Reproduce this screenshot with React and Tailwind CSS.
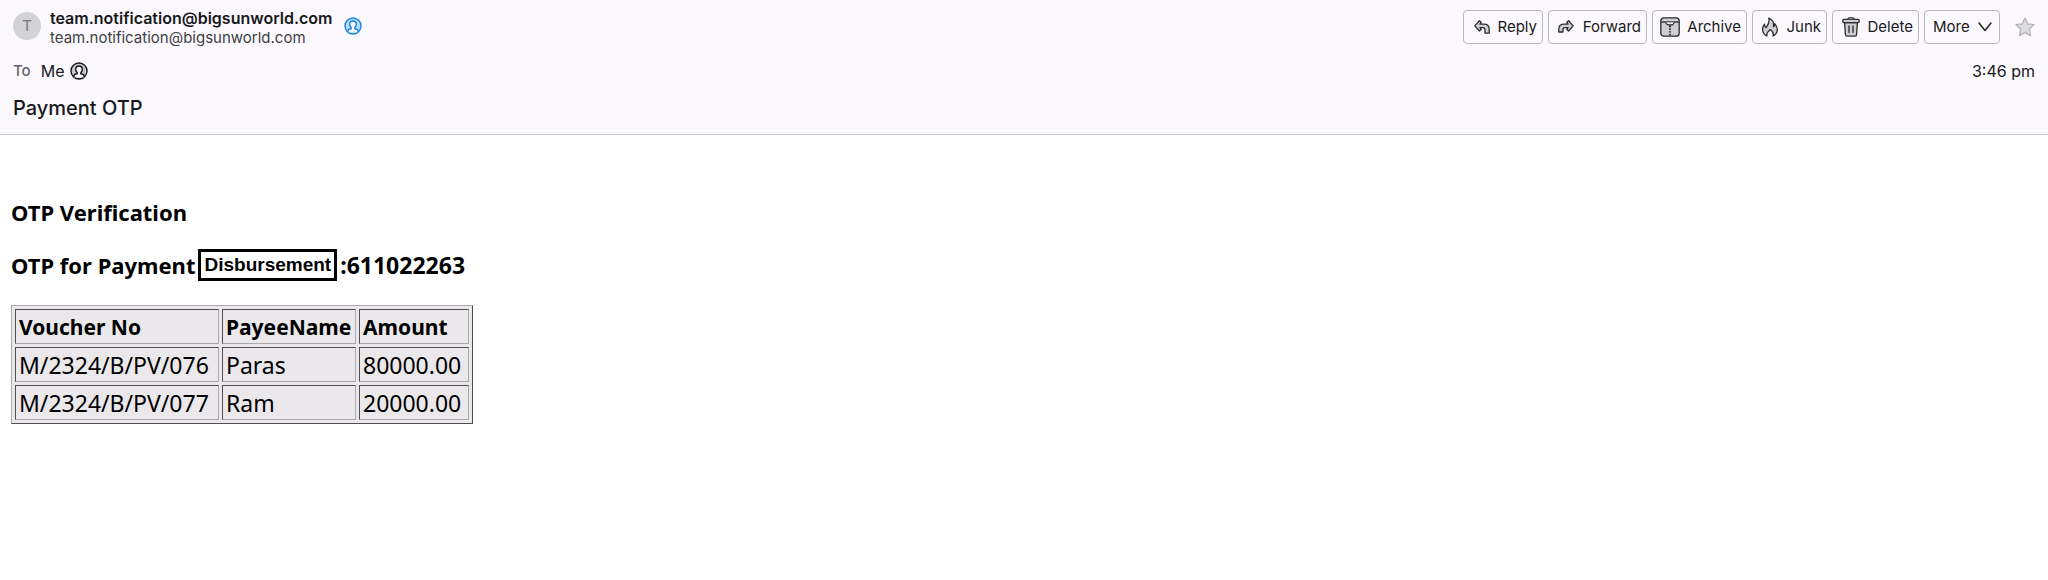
import React from 'react';

const vouchers = [
  { id: 'M/2324/B/PV/076', payee: 'Paras', amount: '80000.00' },
  { id: 'M/2324/B/PV/077', payee: 'Ram', amount: '20000.00' }
];

const cellBorder = 'border border-t-[#504c51] border-l-[#504c51] border-b-[#a9a8ab] border-r-[#a9a8ab]';

const ReplyIcon = () => (
  <svg viewBox="0 0 16 14" className="w-4 h-[14px]" fill="#cfced1" stroke="#2b2b2e" strokeWidth="1.3" strokeLinejoin="round">
    <path d="M5.4 0.8 L0.8 5.9 L5.4 11 L7.2 9.6 L6 7.6 H8.6 Q11 7.6 11 10 V13.2 H15.2 V9.4 Q15.2 4.2 10 4.2 H6 L7.2 2.2 Z" />
  </svg>
);

const ForwardIcon = () => (
  <svg viewBox="0 0 16 14" className="w-4 h-[14px]" fill="#cfced1" stroke="#2b2b2e" strokeWidth="1.3" strokeLinejoin="round">
    <path d="M10.6 0.8 L15.2 5.9 L10.6 11 L8.8 9.6 L10 7.6 H7.4 Q5 7.6 5 9.6 V12 H0.8 V9.2 Q0.8 4.2 6 4.2 H10 L8.8 2.2 Z" />
  </svg>
);

const ArchiveIcon = () => (
  <svg viewBox="0 0 20 20" className="w-5 h-5" fill="none" stroke="#2b2b2e" strokeWidth="1.3" strokeLinejoin="round">
    <rect x="0.8" y="0.8" width="18.4" height="18.4" rx="3" fill="#cfced1" />
    <path d="M1 5 H19" />
    <path d="M5.5 5.4 L7.4 8 L9 7.4 L10 9 L11 7.4 L12.6 8 L14.5 5.4" fill="#fbf9fd" strokeWidth="1.1" />
    <path d="M10 9 V19" strokeDasharray="1.4 1.2" strokeWidth="1.8" />
  </svg>
);

const JunkIcon = () => (
  <svg viewBox="0 0 16 20" className="w-4 h-5" fill="#cfced1" stroke="#2b2b2e" strokeWidth="1.3" strokeLinejoin="round">
    <path d="M5 19 C-0.4 16.4 -0.4 10.8 2.6 7.2 C2.4 9 2.8 10.2 4 10.6 C6 7.8 8.2 5.4 6.8 1 C11 3 12.2 6.2 11.4 9.6 C12.6 9.2 13 8 12.8 6.6 C16.4 10.8 16.2 16.6 11 19 C12 16.6 11 14.8 8.4 12.6 C5.6 14.8 4.2 16.6 5 19 Z" />
  </svg>
);

const DeleteIcon = () => (
  <svg viewBox="0 0 18 20" className="w-[18px] h-5" fill="#cfced1" stroke="#2b2b2e" strokeWidth="1.3" strokeLinejoin="round" strokeLinecap="round">
    <path d="M2.6 5.6 L3.4 17.4 Q3.5 19.2 5.2 19.2 H12.8 Q14.5 19.2 14.6 17.4 L15.4 5.6 Z" />
    <rect x="0.8" y="2.4" width="16.4" height="3.2" rx="1.2" />
    <path d="M6 2.2 Q6 0.8 7.4 0.8 H10.6 Q12 0.8 12 2.2" />
    <path d="M7 9 V15.6 M11 9 V15.6" />
  </svg>
);

const ContactIcon = ({ stroke, fill }) => (
  <svg viewBox="0 0 18 18" className="w-[18px] h-[18px] shrink-0" stroke={stroke} strokeWidth="1.4" strokeLinejoin="round">
    <circle cx="9" cy="9" r="8" fill={fill} />
    <path d="M4 15.2 V14 C4 12.6 5.4 12 7.2 11.8 V10.6 C4.6 8.4 5.2 4 9 4 C12.8 4 13.4 8.4 10.8 10.6 V11.8 C12.6 12 14 12.6 14 14 V15.2" fill="#fbf9fd" />
  </svg>
);

const ActionButton = ({ icon, label, className }) => (
  <button
    type="button"
    className={`flex items-center justify-between h-[34px] border border-[#b9b8bb] rounded-[4px] text-[#18181b] ${className}`}
  >
    {icon}
    {label}
  </button>
);

function App() {
  return (
    <div className="min-h-screen bg-white font-['Inter',sans-serif]">
      {/* Message header */}
      <header className="bg-[#fbf9fd] border-b border-[#cfced2] px-[13px] pt-[10px] pb-3 text-[#18181b]">
        <div className="flex justify-between items-start">
          <div className="flex items-center h-8">
            <div className="w-7 h-7 mr-[9px] rounded-full bg-[#d3d2d5] text-[#77767a] text-[15px] flex items-center justify-center">T</div>
            <div className="mr-[11px] pt-[3px]">
              <div className="text-base leading-5 font-semibold">team.notification@bigsunworld.com</div>
              <div className="text-[15px] leading-5 text-[#3f3f43]">team.notification@bigsunworld.com</div>
            </div>
            <ContactIcon stroke="#1a85e0" fill="#b9dcf8" />
          </div>

          <div className="flex items-center gap-[5px] text-[15px]">
            <ActionButton icon={<ReplyIcon />} label="Reply" className="w-20 pl-[10px] pr-[5px]" />
            <ActionButton icon={<ForwardIcon />} label="Forward" className="w-[99px] pl-[9px] pr-[5px]" />
            <ActionButton icon={<ArchiveIcon />} label="Archive" className="w-[95px] pl-[7px] pr-[5px]" />
            <ActionButton icon={<JunkIcon />} label="Junk" className="w-[75px] pl-[9px] pr-[5px]" />
            <ActionButton icon={<DeleteIcon />} label="Delete" className="w-[87px] pl-[9px] pr-[5px]" />
            <ActionButton
              icon="More"
              label={
                <svg viewBox="0 0 14 10" className="w-[14px] h-[10px]" fill="none" stroke="#2b2b2e" strokeWidth="1.6" strokeLinecap="round" strokeLinejoin="round">
                  <path d="M1 1 L7 8.4 L13 1" />
                </svg>
              }
              className="w-[76px] pl-2 pr-[7px]"
            />
            <button type="button" aria-label="Star" className="ml-[10px]">
              <svg viewBox="0 0 20 20" className="w-5 h-5" fill="#dddcdf" stroke="#b4b3b7" strokeWidth="1.3" strokeLinejoin="round">
                <path d="M10 1 L12.7 6.9 L19 7.7 L14.3 12 L15.6 18.8 L10 15.4 L4.4 18.8 L5.7 12 L1 7.7 L7.3 6.9 Z" />
              </svg>
            </button>
          </div>
        </div>

        <div className="flex justify-between items-center mt-[15px] h-6 text-base">
          <div className="flex items-center">
            <span className="text-[15px] font-medium text-[#66656a] mr-[10px]">To</span>
            <span className="mr-[6px]">Me</span>
            <ContactIcon stroke="#18181b" fill="#c9c8cc" />
          </div>
          <time>3:46 pm</time>
        </div>

        <h1 className="mt-[11px] text-xl leading-7 font-medium">Payment OTP</h1>
      </header>

      {/* Message body */}
      <main className="px-[11px] pt-[62px] font-['Noto_Sans',sans-serif] text-[22px] leading-[30px] text-black">
        <h2 className="font-bold">OTP Verification</h2>
        <p className="mt-[22px] font-bold flex items-center">
          OTP for Payment
          <span className="mx-[3px] h-8 px-[3px] border-[3px] border-black font-['Liberation_Sans',sans-serif] text-[19px] leading-[26px]">Disbursement</span>
          <span className="text-[23px]">:611022263</span>
        </p>

        <table className="mt-6 w-[462px] table-fixed border-separate border-spacing-[3px] border border-t-[#a9a8ab] border-l-[#a9a8ab] border-b-[#504c51] border-r-[#504c51] bg-[#ebe8eb]">
          <thead>
            <tr className="text-left text-[21px]">
              <th className={`w-[204px] h-[35px] px-[3px] ${cellBorder}`}>Voucher No</th>
              <th className={`w-[134px] h-[35px] px-[3px] ${cellBorder}`}>PayeeName</th>
              <th className={`h-[35px] px-[3px] ${cellBorder}`}>Amount</th>
            </tr>
          </thead>
          <tbody className="text-[23px]">
            {vouchers.map(v => (
              <tr key={v.id}>
                <td className={`h-[35px] px-[3px] ${cellBorder}`}>{v.id}</td>
                <td className={`h-[35px] px-[3px] ${cellBorder}`}>{v.payee}</td>
                <td className={`h-[35px] px-[3px] ${cellBorder}`}>{v.amount}</td>
              </tr>
            ))}
          </tbody>
        </table>
      </main>
    </div>
  );
}

export default App;
